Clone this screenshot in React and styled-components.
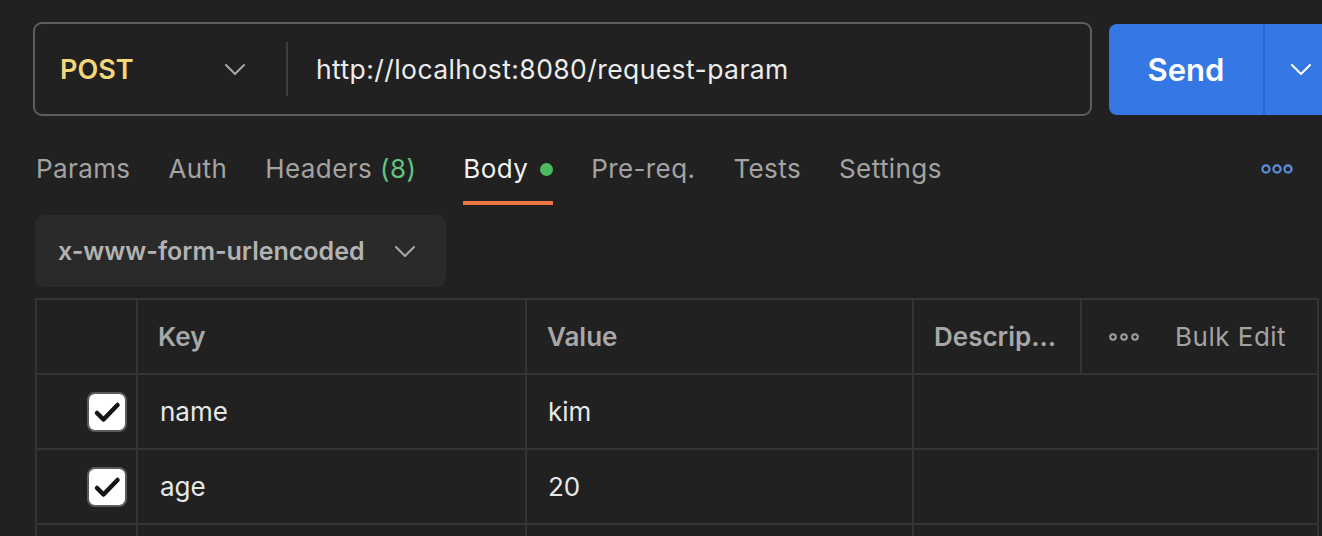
import React from 'react';
import styled, { createGlobalStyle } from 'styled-components';

const GlobalStyle = createGlobalStyle`
  body {
    margin: 0;
    background: #212121;
    font-family: Inter, 'Liberation Sans', sans-serif;
    overflow: hidden;
  }
`

const Page = styled.div`
  width: 1282px;
  padding: 22px 0 0 35px;
`

const TopBar = styled.div`
  display: flex;
  align-items: center;
  gap: 17px;
  width: 1304px;
  margin-left: -2px;
`

const UrlBox = styled.div`
  flex: 1;
  display: flex;
  align-items: center;
  height: 94px;
  box-sizing: border-box;
  border: 2px solid #5e5e5e;
  border-radius: 9px;
`

const MethodSelect = styled.div`
  width: 251px;
  box-sizing: border-box;
  padding: 0 41px 0 25px;
  display: flex;
  align-items: center;
  justify-content: space-between;
  font-size: 27px;
  font-weight: 600;
  color: #f3d87a;
`

const Divider = styled.div`
  width: 2px;
  height: 54px;
  background: #404040;
`

const UrlText = styled.div`
  padding-left: 28px;
  font-size: 26.5px;
  letter-spacing: 0.42px;
  color: #ececec;
`

const SendGroup = styled.div`
  display: flex;
  width: 228px;
  height: 91px;
  border-radius: 8px;
  background: #3578e5;
  color: #fff;
`

const SendLabel = styled.div`
  width: 154px;
  display: flex;
  align-items: center;
  justify-content: center;
  font-size: 31px;
  font-weight: 600;
`

const SendSplit = styled.div`
  flex: 1;
  display: flex;
  align-items: center;
  justify-content: center;
  border-left: 2px solid #2d69cc;
`

const Tabs = styled.div`
  display: flex;
  align-items: flex-start;
  gap: 38px;
  margin-top: 34px;
  padding-left: 1px;
`

const Tab = styled.div`
  display: flex;
  align-items: center;
  font-size: 26px;
  letter-spacing: 0.4px;
  line-height: 38px;
  padding-bottom: 13px;
  border-bottom: 4px solid ${p => (p.$active ? '#ee7443' : 'transparent')};
  color: ${p => (p.$active ? '#f2f2f2' : '#a3a3a3')};
  margin-right: ${p => p.$extra || 0}px;
`

const Count = styled.span`
  margin-left: 8px;
  color: #62c482;
`

const Dot = styled.span`
  width: 13px;
  height: 13px;
  margin-left: 12px;
  border-radius: 50%;
  background: #4dbb5f;
`

const More = styled.div`
  margin-left: auto;
  margin-right: 24px;
  height: 38px;
  display: flex;
  align-items: center;
`

const BodyType = styled.div`
  display: flex;
  align-items: center;
  gap: 30px;
  width: 411px;
  height: 72px;
  box-sizing: border-box;
  margin-top: 10px;
  padding-left: 23px;
  border-radius: 9px;
  background: #2a2a2a;
  font-size: 25px;
  font-weight: 600;
  color: #b3b3b3;
`

const Table = styled.div`
  margin-top: 11px;
  width: 1282px;
  border-top: 2px solid #343434;
  border-left: 2px solid #343434;
`

const Row = styled.div`
  display: grid;
  grid-template-columns: 101px 389px 387px 168px 1fr;
  height: 75px;
`

const Cell = styled.div`
  display: flex;
  align-items: center;
  gap: ${p => (p.$gap ? `${p.$gap}px` : '0')};
  box-sizing: border-box;
  padding-left: ${p => (p.$pad ?? 20)}px;
  padding-right: ${p => (p.$right ?? 0)}px;
  justify-content: ${p => (p.$end ? 'flex-end' : 'flex-start')};
  grid-column: ${p => (p.$span ? `span ${p.$span}` : 'auto')};
  border-right: 2px solid #343434;
  border-bottom: 2px solid #343434;
  font-size: 26px;
  font-weight: ${p => (p.$head ? 600 : 400)};
  color: ${p => (p.$head ? '#a8a8a8' : '#e8e8e8')};
`

const Muted = styled.span`
  font-weight: 400;
  letter-spacing: 0.5px;
  color: #a3a3a3;
`

const Checkbox = styled.div`
  width: 40px;
  height: 40px;
  box-sizing: border-box;
  border: 2px solid #5c5c5c;
  border-radius: 8px;
  background: #fff;
  display: flex;
`

const Chevron = ({ color = '#a8a8a8' }) => (
  <svg width="20" height="11" viewBox="0 0 20 11">
    <polyline points="1,1 10,10 19,1" fill="none" stroke={color} strokeWidth="2" strokeLinecap="round" strokeLinejoin="round" />
  </svg>
)

const Dots = ({ color, r = 3.6, w = 2.2 }) => (
  <svg width="32" height="10" viewBox="0 0 32 10">
    {[5, 16, 27].map(cx => (
      <circle key={cx} cx={cx} cy="5" r={r} fill="none" stroke={color} strokeWidth={w} />
    ))}
  </svg>
)

const Check = () => (
  <Checkbox>
    <svg width="36" height="36" viewBox="0 0 36 36">
      <path d="M8 19 L14.5 25.5 L28.5 11" fill="none" stroke="#151515" strokeWidth="4.5" strokeLinecap="round" strokeLinejoin="round" />
    </svg>
  </Checkbox>
)

const tabs = [
  { label: 'Params' },
  { label: 'Auth' },
  { label: 'Headers', count: 8, extra: 9 },
  { label: 'Body', active: true, dot: true },
  { label: 'Pre-req.' },
  { label: 'Tests' },
  { label: 'Settings' },
]

const params = [
  { key: 'name', value: 'kim' },
  { key: 'age', value: '20' },
]

export default function App() {
  return (
    <Page>
      <GlobalStyle />
      <TopBar>
        <UrlBox>
          <MethodSelect>
            POST
            <Chevron />
          </MethodSelect>
          <Divider />
          <UrlText>http://localhost:8080/request-param</UrlText>
        </UrlBox>
        <SendGroup>
          <SendLabel>Send</SendLabel>
          <SendSplit>
            <Chevron color="#ffffff" />
          </SendSplit>
        </SendGroup>
      </TopBar>

      <Tabs>
        {tabs.map(t => (
          <Tab key={t.label} $active={t.active} $extra={t.extra}>
            {t.label}
            {t.count && <Count>({t.count})</Count>}
            {t.dot && <Dot />}
          </Tab>
        ))}
        <More>
          <Dots color="#5b8fe0" />
        </More>
      </Tabs>

      <BodyType>
        x-www-form-urlencoded
        <Chevron />
      </BodyType>

      <Table>
        <Row>
          <Cell $head />
          <Cell $head>Key</Cell>
          <Cell $head>Value</Cell>
          <Cell $head>Descrip...</Cell>
          <Cell $head $pad={26} $gap={35}>
            <Dots color="#a0a0a0" r={2.8} w={2} />
            <Muted>Bulk Edit</Muted>
          </Cell>
        </Row>
        {params.map(p => (
          <Row key={p.key}>
            <Cell $end $pad={0} $right={9}>
              <Check />
            </Cell>
            <Cell $pad={22}>{p.key}</Cell>
            <Cell $pad={21}>{p.value}</Cell>
            <Cell $span={2} />
          </Row>
        ))}
        <Row>
          <Cell />
          <Cell />
          <Cell />
          <Cell $span={2} />
        </Row>
      </Table>
    </Page>
  );
}
